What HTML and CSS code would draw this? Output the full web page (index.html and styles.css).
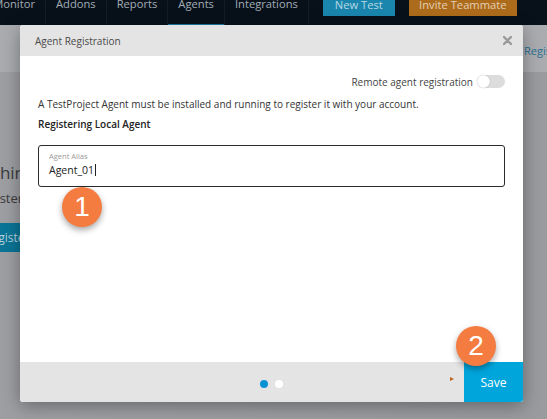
FILE: index.html
```html
<!DOCTYPE html>
<html>
<head>
<meta charset="utf-8">
<link rel="stylesheet" href="styles.css">
</head>
<body>
<div class="screen">
  <nav class="nav">
    <span class="nav-item first">Monitor</span>
    <span class="nav-item">Addons</span>
    <span class="nav-item">Reports</span>
    <span class="nav-item active">Agents</span>
    <span class="nav-item">Integrations</span>
    <span class="btn btn-blue">New Test</span>
    <span class="btn btn-orange">Invite Teammate</span>
  </nav>
  <div class="subbar"><span class="sub-link">Register</span></div>
  <div class="page">
    <div class="page-title">Machines</div>
    <div class="page-text">Register</div>
    <div class="page-btn">Register</div>
  </div>

  <div class="modal">
    <div class="modal-header">
      <span class="modal-title">Agent Registration</span>
      <svg class="modal-close" width="9" height="9" viewBox="0 0 9 9"><path d="M1 1 L8 8 M8 1 L1 8" stroke="#9a9a9a" stroke-width="2.4" stroke-linecap="round"/></svg>
    </div>
    <div class="modal-body">
      <div class="remote-row">
        <span>Remote agent registration</span>
        <span class="toggle"><span class="knob"></span></span>
      </div>
      <p class="info">A TestProject Agent must be installed and running to register it with your account.</p>
      <p class="section">Registering Local Agent</p>
      <div class="field">
        <div class="field-label">Agent Alias</div>
        <div class="field-value">Agent_01<span class="caret"></span></div>
      </div>
    </div>
    <div class="modal-footer">
      <div class="dots"><span class="dot on"></span><span class="dot"></span></div>
      <span class="tri"></span>
      <span class="save">Save</span>
    </div>
  </div>

  <div class="badge badge-1">1</div>
  <div class="badge badge-2">2</div>
</div>
</body>
</html>
```
FILE: styles.css
```css
* { box-sizing: border-box; }
html, body { margin: 0; padding: 0; }
body {
  width: 547px;
  height: 419px;
  overflow: hidden;
  font-family: "Open Sans", "Liberation Sans", sans-serif;
  background: #9c9da1;
}
.screen {
  position: relative;
  width: 547px;
  height: 419px;
  overflow: hidden;
  background: linear-gradient(90deg, #9e9fa3 0%, #9a9b9f 100%);
}
.nav {
  height: 25px;
  background: #08111a;
  display: flex;
  align-items: flex-start;
  white-space: nowrap;
}
.nav-item {
  color: #a3adb6;
  font-size: 11.2px;
  line-height: 10px;
  height: 25px;
  padding: 0 10px;
  border-right: 1px solid #141d27;
  margin-top: -1px;
  flex: none;
}
.nav-item.first { width: 46px; text-align: right; overflow: hidden; direction: rtl; }
.nav-item.active { border-bottom: 2px solid #1a7ea6; height: 27px; }
.btn {
  font-size: 11.2px;
  line-height: 12px;
  height: 17px;
  padding: 0 6px;
  margin-top: -1px;
  color: #b9d6e2;
  flex: none;
}
.btn-blue { background: #1a86ae; margin-left: 14px; width: 72px; text-align: center; }
.btn-orange { background: #ad6c1b; margin-left: 14px; width: 108px; text-align: center; color: #e3cfb6; }
.subbar {
  height: 47px;
  background: #abacaf;
  position: relative;
}
.sub-link {
  position: absolute;
  left: 524px;
  top: 18px;
  font-size: 11px;
  color: #2a6f92;
  white-space: nowrap;
}
.page { padding-top: 89px; }
.page-title { font-size: 17px; color: #3a3b3e; line-height: 24px; margin-left: -33px; white-space: nowrap; }
.page-text { font-size: 13px; color: #3a3b3e; margin-top: 4px; line-height: 18px; margin-left: -26px; white-space: nowrap; }
.page-btn {
  margin-top: 16px;
  margin-left: -30px;
  width: 90px;
  height: 29px;
  line-height: 29px;
  background: #0a7597;
  color: #b7d3de;
  font-size: 12px;
  padding-left: 14px;
  white-space: nowrap;
}

.modal {
  position: absolute;
  left: 20px;
  top: 25px;
  width: 503px;
  height: 377px;
  background: #fff;
  border-radius: 3px;
  display: flex;
  flex-direction: column;
  box-shadow: 0 4px 18px rgba(0,0,0,0.35);
  overflow: hidden;
}
.modal-header {
  height: 31px;
  background: #e4e4e4;
  display: flex;
  align-items: center;
  justify-content: space-between;
  padding: 0 11px 0 15px;
}
.modal-title { font-size: 10px; color: #4a4a4a; }
.modal-close { display: block; }
.modal-body {
  flex: 1;
  padding: 0 18px;
  color: #333;
}
.remote-row {
  display: flex;
  justify-content: flex-end;
  align-items: center;
  gap: 4px;
  margin-top: 19px;
  height: 13px;
  font-size: 10px;
  color: #444;
}
.toggle {
  width: 28px;
  height: 13px;
  border-radius: 7px;
  background: #dcdcdc;
  position: relative;
  display: inline-block;
}
.knob {
  position: absolute;
  left: 0;
  top: 0;
  width: 13px;
  height: 13px;
  border-radius: 50%;
  background: #fff;
  box-shadow: 0 0 1px rgba(0,0,0,0.35);
}
.info {
  margin: 9px 0 0;
  font-size: 10px;
  line-height: 14px;
}
.section {
  margin: 6px 0 0;
  font-size: 10px;
  line-height: 14px;
  font-weight: 600;
  color: #222;
}
.field {
  margin-top: 14px;
  height: 42px;
  border: 1.5px solid #2b2b2b;
  border-radius: 3px;
  padding: 5px 10px 0;
}
.field-label { font-size: 7.5px; color: #999; line-height: 10px; }
.field-value { font-size: 10.5px; color: #222; line-height: 16px; margin-top: 1px; }
.caret {
  display: inline-block;
  width: 1px;
  height: 12px;
  background: #222;
  vertical-align: -2px;
  margin-left: 1px;
}
.modal-footer {
  height: 40px;
  background: #e4e4e4;
  display: flex;
  align-items: center;
  position: relative;
}
.dots {
  position: absolute;
  left: 0;
  right: 0;
  top: 18px;
  display: flex;
  justify-content: center;
  gap: 7px;
}
.dot { width: 8px; height: 8px; border-radius: 50%; background: #fff; }
.dot.on { background: #0a92d6; }
.tri {
  position: absolute;
  left: 430px;
  top: 15px;
  width: 0;
  height: 0;
  border-top: 2px solid transparent;
  border-bottom: 2px solid transparent;
  border-left: 4px solid #c0641c;
}
.save {
  margin-left: auto;
  width: 59px;
  height: 40px;
  background: #00a5dc;
  color: #fff;
  font-size: 12px;
  display: flex;
  align-items: center;
  justify-content: center;
}

.badge {
  position: absolute;
  width: 40px;
  height: 40px;
  border-radius: 50%;
  background: #f47c40;
  color: #fff;
  font-family: "Liberation Sans", Arial, sans-serif;
  font-size: 28px;
  line-height: 40px;
  text-align: center;
  box-shadow: 0 3px 6px rgba(0,0,0,0.35);
}
.badge-1 { left: 62px; top: 187px; }
.badge-2 { left: 456px; top: 326px; }
```
